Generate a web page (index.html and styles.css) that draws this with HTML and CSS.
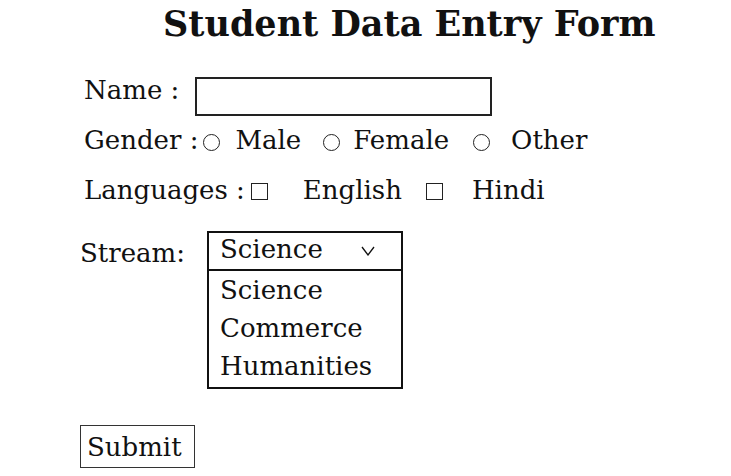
FILE: index.html
```html
<!DOCTYPE html>
<html lang="en">
<head>
<meta charset="utf-8">
<title>Student Data Entry Form</title>
<link rel="stylesheet" href="styles.css">
</head>
<body>
<h1 class="title">Student Data Entry Form</h1>
<form class="form">
  <div class="row">
    <label class="label" for="name">Name :</label>
    <input class="textbox" id="name" type="text">
  </div>
  <div class="row">
    <span class="label">Gender :</span>
    <label class="opt opt-male"><input class="radio" type="radio" name="g"><span class="opt-text">Male</span></label>
    <label class="opt opt-female"><input class="radio" type="radio" name="g"><span class="opt-text">Female</span></label>
    <label class="opt opt-other"><input class="radio" type="radio" name="g"><span class="opt-text">Other</span></label>
  </div>
  <div class="row">
    <span class="label">Languages :</span>
    <label class="opt opt-english"><input class="check" type="checkbox"><span class="opt-text">English</span></label>
    <label class="opt opt-hindi"><input class="check" type="checkbox"><span class="opt-text">Hindi</span></label>
  </div>
  <div class="stream-row">
    <span class="stream-label">Stream:</span>
    <div class="select">
      <div class="select-head">
        <span>Science</span>
        <svg class="chevron" width="14" height="10" viewBox="0 0 14 10"><polyline points="1,1 7,9 13,1" fill="none" stroke="#111" stroke-width="1.3"/></svg>
      </div>
      <ul class="select-list">
        <li class="select-item">Science</li>
        <li class="select-item">Commerce</li>
        <li class="select-item">Humanities</li>
      </ul>
    </div>
  </div>
  <button class="submit" type="button">Submit</button>
</form>
</body>
</html>
```

FILE: styles.css
```css
* { box-sizing: border-box; }
body {
  margin: 0;
  background: #fff;
  color: #111;
  font-family: "DejaVu Serif", "Liberation Serif", serif;
}
.title {
  margin: 0 0 21px 163px;
  padding-top: 4px;
  font-size: 35px;
  line-height: 40px;
  font-weight: bold;
  white-space: nowrap;
}
.form {
  padding-left: 80px;
  font-size: 26px;
}
.row {
  display: flex;
  align-items: flex-start;
  height: 50px;
  line-height: 50px;
}
.label {
  margin-left: 4px;
  white-space: nowrap;
}
.textbox {
  margin: 12px 0 0 16px;
  width: 297px;
  height: 39px;
  border: 2px solid #222;
  background: #fff;
  font: inherit;
  padding: 0 6px;
  outline: none;
}
.opt {
  display: flex;
  align-items: center;
  white-space: nowrap;
}
.radio, .check {
  -webkit-appearance: none;
  appearance: none;
  margin: 0;
  background: #fff;
  border: 1.5px solid #222;
  flex: none;
}
.radio {
  width: 17px;
  height: 17px;
  border-radius: 50%;
  margin-top: 4px;
}
.check {
  width: 17px;
  height: 17px;
  border-radius: 0;
  margin-top: 2px;
}
.opt-male { margin-left: 5px; }
.opt-male .opt-text { margin-left: 15px; }
.opt-female { margin-left: 22px; }
.opt-female .opt-text { margin-left: 13px; }
.opt-other { margin-left: 24px; }
.opt-other .opt-text { margin-left: 21px; }
.opt-english { margin-left: 6px; }
.opt-english .opt-text { margin-left: 35px; }
.opt-hindi { margin-left: 24px; }
.opt-hindi .opt-text { margin-left: 29px; }

.stream-row {
  display: flex;
  align-items: flex-start;
  margin-top: 16px;
}
.stream-label {
  margin-top: 2px;
  line-height: 40px;
  width: 127px;
  flex: none;
}
.select {
  width: 196px;
  border: 2px solid #111;
}
.select-head {
  display: flex;
  align-items: center;
  height: 38px;
  line-height: 32px;
  padding: 0 26px 4px 11px;
  border-bottom: 2px solid #111;
}
.chevron { margin-left: auto; margin-top: 4px; }
.select-list {
  list-style: none;
  margin: 0;
  padding: 0 0 2px 11px;
}
.select-item {
  line-height: 38px;
  height: 38px;
}
.submit {
  display: block;
  margin-top: 36px;
  width: 115px;
  height: 43px;
  text-align: left;
  font: inherit;
  font-size: 26px;
  line-height: 30px;
  color: #111;
  background: #fff;
  border: 1.5px solid #333;
  padding: 6px 0 5px 6px;
  border-radius: 0;
}
```
